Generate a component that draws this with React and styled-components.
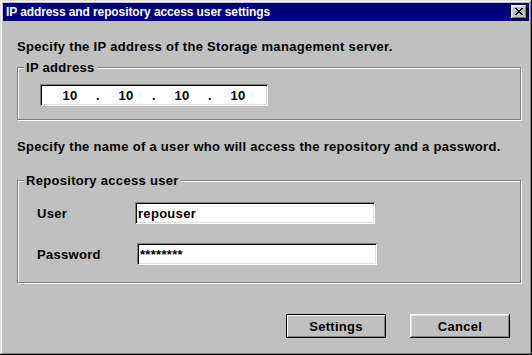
import React from "react";
import styled, { createGlobalStyle, css } from "styled-components";

const GlobalStyle = createGlobalStyle`
  html, body { margin: 0; padding: 0; background: #c0c0c0; }
  body { font-family: "Liberation Sans", Arial, sans-serif; }
  * { box-sizing: border-box; }
`;

const raised = css`
  box-shadow: inset -1px -1px #000, inset 1px 1px #fff, inset -2px -2px #808080,
    inset 2px 2px #dfdfdf;
`;

const sunken = css`
  box-shadow: inset 1px 1px #808080, inset -1px -1px #fff, inset 2px 2px #000,
    inset -2px -2px #dfdfdf;
`;

const Window = styled.div`
  width: 532px;
  height: 355px;
  padding: 3px;
  background: #c0c0c0;
  display: flex;
  flex-direction: column;
  box-shadow: inset -1px -1px #000, inset 1px 1px #dfdfdf, inset -2px -2px #808080,
    inset 2px 2px #fff;
`;

const TitleBar = styled.div`
  height: 18px;
  background: #000080;
  display: flex;
  align-items: center;
  justify-content: space-between;
  padding: 0 2px 0 3px;
`;

const Title = styled.span`
  color: #fff;
  font-size: 12px;
  font-weight: bold;
  letter-spacing: -0.1px;
  line-height: 18px;
  white-space: nowrap;
`;

const CloseButton = styled.button`
  width: 16px;
  height: 14px;
  padding: 0 0 1px 0;
  border: none;
  background: #c0c0c0;
  display: flex;
  align-items: center;
  justify-content: center;
  ${raised}
`;

const Content = styled.div`
  flex: 1;
  display: flex;
  flex-direction: column;
  padding: 0 8px 0 14px;
`;

const Text = styled.div`
  margin-top: ${(p) => p.$top}px;
  font-size: 13px;
  font-weight: bold;
  letter-spacing: 0.3px;
  line-height: 15px;
  color: #000;
  white-space: nowrap;
`;

const Group = styled.div`
  position: relative;
  margin-top: ${(p) => p.$top}px;
  padding: ${(p) => p.$pad};
  border: 1px solid #808080;
  box-shadow: inset 1px 1px #fff, 1px 1px #fff;
  display: flex;
  flex-direction: column;
  gap: 19px;
`;

const Legend = styled.span`
  position: absolute;
  top: -8px;
  left: 6px;
  padding: 0 2px;
  background: #c0c0c0;
  font-size: 13px;
  font-weight: bold;
  letter-spacing: 0.3px;
  line-height: 15px;
  color: #000;
  white-space: nowrap;
`;

const IpBox = styled.div`
  width: 228px;
  height: 22px;
  background: #fff;
  padding-left: 9px;
  display: flex;
  align-items: center;
  ${sunken}
`;

const IpPart = styled.span`
  width: ${(p) => (p.$dot ? 14 : 42)}px;
  text-align: center;
  font-size: 13px;
  font-weight: bold;
  letter-spacing: 0.3px;
  color: #000;
`;

const Row = styled.div`
  display: flex;
  align-items: center;
`;

const Label = styled.span`
  width: 98px;
  font-size: 13px;
  font-weight: bold;
  letter-spacing: 0.3px;
  color: #000;
`;

const Field = styled.div`
  margin-left: ${(p) => p.$shift || 0}px;
  width: 240px;
  height: 22px;
  background: #fff;
  padding: 0 3px;
  display: flex;
  align-items: center;
  font-size: 13px;
  font-weight: bold;
  letter-spacing: 0.3px;
  color: #000;
  ${sunken}
`;

const Buttons = styled.div`
  margin-top: 31px;
  padding-right: 11px;
  display: flex;
  justify-content: flex-end;
  gap: 24px;
`;

const Button = styled.button`
  width: 100px;
  height: 24px;
  padding: 0;
  background: #c0c0c0;
  font-family: "Liberation Sans", Arial, sans-serif;
  font-size: 13px;
  font-weight: bold;
  letter-spacing: 0.3px;
  color: #000;
  ${(p) =>
    p.$default
      ? css`
          border: 1px solid #000;
          box-shadow: inset 1px 1px #fff, inset -1px -1px #808080;
        `
      : css`
          border: none;
          ${raised}
        `}
`;

const ipParts = ["10", "10", "10", "10"];

export default function App() {
  return (
    <>
      <GlobalStyle />
      <Window>
        <TitleBar>
          <Title>IP address and repository access user settings</Title>
          <CloseButton aria-label="Close">
            <svg width="8" height="7" viewBox="0 0 8 7" shapeRendering="crispEdges">
              <path d="M0 0h2v1h1v1h2V1h1V0h2v1H7v1H6v1H5v1h1v1h1v1h1v1H6V6H5V5H3v1H2v1H0V6h1V5h1V4h1V3H2V2H1V1H0z" fill="#000" />
            </svg>
          </CloseButton>
        </TitleBar>
        <Content>
          <Text $top={18}>Specify the IP address of the Storage management server.</Text>
          <Group $top={13} $pad="16px 0 13px 22px">
            <Legend>IP address</Legend>
            <IpBox>
              {ipParts.map((v, i) => (
                <React.Fragment key={i}>
                  {i > 0 && <IpPart $dot>.</IpPart>}
                  <IpPart>{v}</IpPart>
                </React.Fragment>
              ))}
            </IpBox>
          </Group>
          <Text $top={19}>
            Specify the name of a user who will access the repository and a password.
          </Text>
          <Group $top={26} $pad="21px 0 17px 19px">
            <Legend>Repository access user</Legend>
            <Row>
              <Label>User</Label>
              <Field>repouser</Field>
            </Row>
            <Row>
              <Label>Password</Label>
              <Field $shift={2}>********</Field>
            </Row>
          </Group>
          <Buttons>
            <Button $default>Settings</Button>
            <Button>Cancel</Button>
          </Buttons>
        </Content>
      </Window>
    </>
  );
}
